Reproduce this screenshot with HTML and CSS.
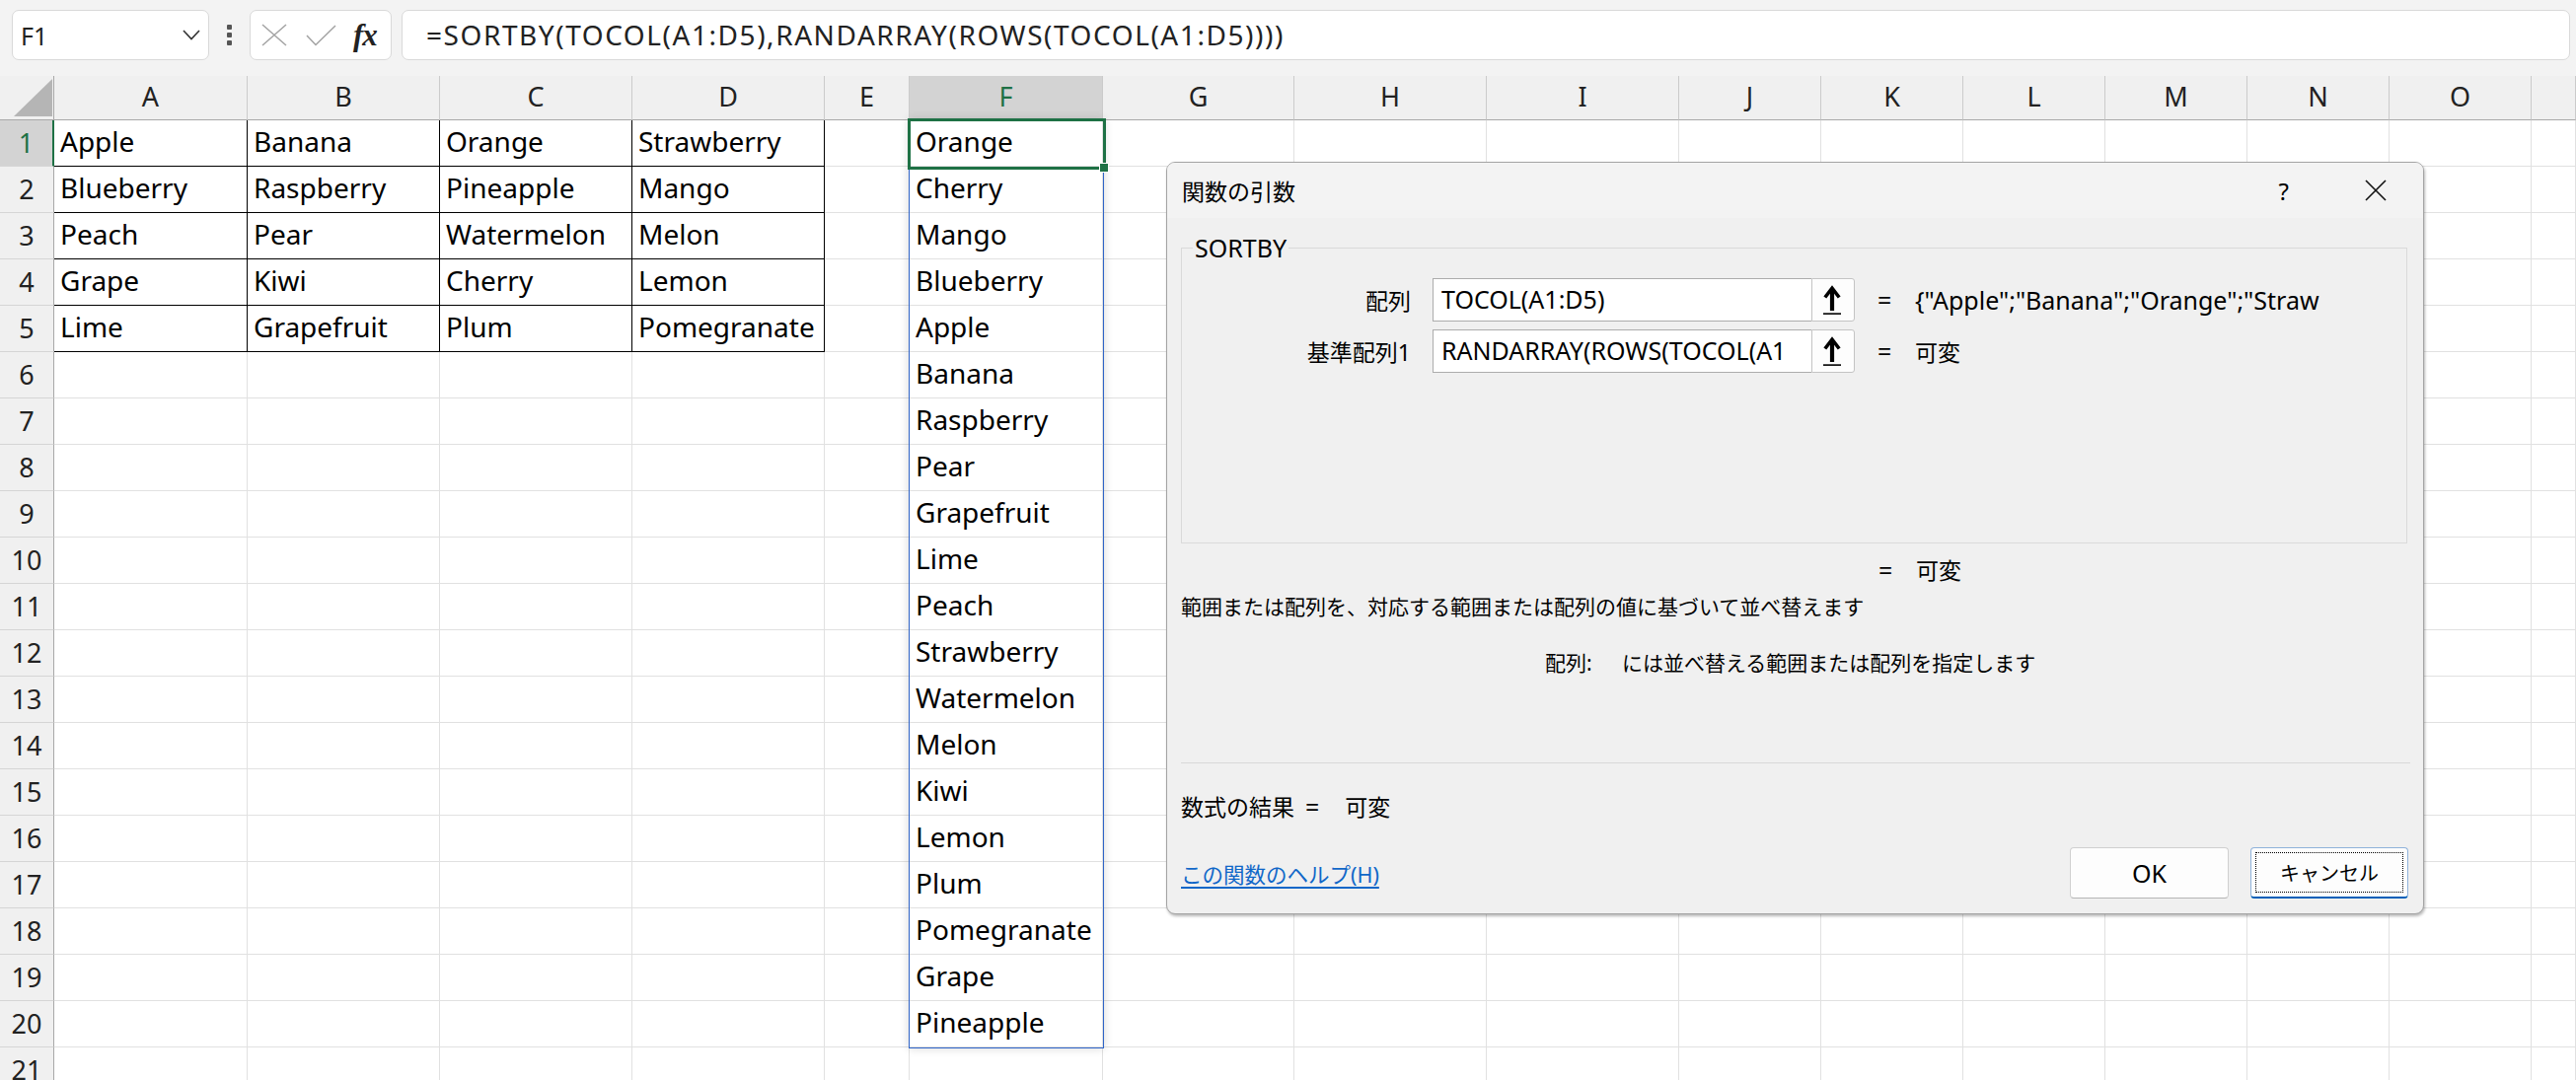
FILE: index.html
```html
<!DOCTYPE html>
<html lang="ja">
<head>
<meta charset="utf-8">
<title>SORTBY</title>
<link rel="stylesheet" href="styles.css">
</head>
<body>
<div class="fbar">
  <div class="namebox"><span class="nb-text">F1</span>
    <svg class="chev" width="18" height="11" viewBox="0 0 18 11"><polyline points="1,1 9,9.5 17,1" fill="none" stroke="#333" stroke-width="1.6"/></svg>
  </div>
  <div class="dots"><i></i><i></i><i></i></div>
  <div class="fxbox">
    <svg class="ico-x" width="26" height="23" viewBox="0 0 26 23"><path d="M1 1 L25 22 M25 1 L1 22" stroke="#a3a3a3" stroke-width="1.5" fill="none"/></svg>
    <svg class="ico-ok" width="31" height="22" viewBox="0 0 31 22"><polyline points="1,11 10,20.5 30,1" fill="none" stroke="#a3a3a3" stroke-width="1.5"/></svg>
    <span class="fx">fx</span>
  </div>
  <div class="formula">=SORTBY(TOCOL(A1:D5),RANDARRAY(ROWS(TOCOL(A1:D5))))</div>
</div>

<div class="sheet">
  <div class="row head">
    <span class="corner"><svg width="55" height="44" viewBox="0 0 55 44"><polygon points="53,3 53,41 14,41" fill="#b5b5b5"/></svg></span>
    <span class="ch">A</span><span class="ch">B</span><span class="ch">C</span><span class="ch">D</span><span class="ch">E</span><span class="ch sel">F</span><span class="ch">G</span><span class="ch">H</span><span class="ch">I</span><span class="ch">J</span><span class="ch">K</span><span class="ch">L</span><span class="ch">M</span><span class="ch">N</span><span class="ch">O</span><span class="ch"></span>
  </div>
  <div class="row"><span class="rh sel">1</span><span class="c b">Apple</span><span class="c b">Banana</span><span class="c b">Orange</span><span class="c b">Strawberry</span><span class="c"></span><span class="c">Orange</span><span class="c"></span><span class="c"></span><span class="c"></span><span class="c"></span><span class="c"></span><span class="c"></span><span class="c"></span><span class="c"></span><span class="c"></span><span class="c"></span></div>
  <div class="row"><span class="rh">2</span><span class="c b">Blueberry</span><span class="c b">Raspberry</span><span class="c b">Pineapple</span><span class="c b">Mango</span><span class="c"></span><span class="c">Cherry</span><span class="c"></span><span class="c"></span><span class="c"></span><span class="c"></span><span class="c"></span><span class="c"></span><span class="c"></span><span class="c"></span><span class="c"></span><span class="c"></span></div>
  <div class="row"><span class="rh">3</span><span class="c b">Peach</span><span class="c b">Pear</span><span class="c b">Watermelon</span><span class="c b">Melon</span><span class="c"></span><span class="c">Mango</span><span class="c"></span><span class="c"></span><span class="c"></span><span class="c"></span><span class="c"></span><span class="c"></span><span class="c"></span><span class="c"></span><span class="c"></span><span class="c"></span></div>
  <div class="row"><span class="rh">4</span><span class="c b">Grape</span><span class="c b">Kiwi</span><span class="c b">Cherry</span><span class="c b">Lemon</span><span class="c"></span><span class="c">Blueberry</span><span class="c"></span><span class="c"></span><span class="c"></span><span class="c"></span><span class="c"></span><span class="c"></span><span class="c"></span><span class="c"></span><span class="c"></span><span class="c"></span></div>
  <div class="row"><span class="rh">5</span><span class="c b">Lime</span><span class="c b">Grapefruit</span><span class="c b">Plum</span><span class="c b">Pomegranate</span><span class="c"></span><span class="c">Apple</span><span class="c"></span><span class="c"></span><span class="c"></span><span class="c"></span><span class="c"></span><span class="c"></span><span class="c"></span><span class="c"></span><span class="c"></span><span class="c"></span></div>
  <div class="row"><span class="rh">6</span><span class="c"></span><span class="c"></span><span class="c"></span><span class="c"></span><span class="c"></span><span class="c">Banana</span><span class="c"></span><span class="c"></span><span class="c"></span><span class="c"></span><span class="c"></span><span class="c"></span><span class="c"></span><span class="c"></span><span class="c"></span><span class="c"></span></div>
  <div class="row"><span class="rh">7</span><span class="c"></span><span class="c"></span><span class="c"></span><span class="c"></span><span class="c"></span><span class="c">Raspberry</span><span class="c"></span><span class="c"></span><span class="c"></span><span class="c"></span><span class="c"></span><span class="c"></span><span class="c"></span><span class="c"></span><span class="c"></span><span class="c"></span></div>
  <div class="row"><span class="rh">8</span><span class="c"></span><span class="c"></span><span class="c"></span><span class="c"></span><span class="c"></span><span class="c">Pear</span><span class="c"></span><span class="c"></span><span class="c"></span><span class="c"></span><span class="c"></span><span class="c"></span><span class="c"></span><span class="c"></span><span class="c"></span><span class="c"></span></div>
  <div class="row"><span class="rh">9</span><span class="c"></span><span class="c"></span><span class="c"></span><span class="c"></span><span class="c"></span><span class="c">Grapefruit</span><span class="c"></span><span class="c"></span><span class="c"></span><span class="c"></span><span class="c"></span><span class="c"></span><span class="c"></span><span class="c"></span><span class="c"></span><span class="c"></span></div>
  <div class="row"><span class="rh">10</span><span class="c"></span><span class="c"></span><span class="c"></span><span class="c"></span><span class="c"></span><span class="c">Lime</span><span class="c"></span><span class="c"></span><span class="c"></span><span class="c"></span><span class="c"></span><span class="c"></span><span class="c"></span><span class="c"></span><span class="c"></span><span class="c"></span></div>
  <div class="row"><span class="rh">11</span><span class="c"></span><span class="c"></span><span class="c"></span><span class="c"></span><span class="c"></span><span class="c">Peach</span><span class="c"></span><span class="c"></span><span class="c"></span><span class="c"></span><span class="c"></span><span class="c"></span><span class="c"></span><span class="c"></span><span class="c"></span><span class="c"></span></div>
  <div class="row"><span class="rh">12</span><span class="c"></span><span class="c"></span><span class="c"></span><span class="c"></span><span class="c"></span><span class="c">Strawberry</span><span class="c"></span><span class="c"></span><span class="c"></span><span class="c"></span><span class="c"></span><span class="c"></span><span class="c"></span><span class="c"></span><span class="c"></span><span class="c"></span></div>
  <div class="row"><span class="rh">13</span><span class="c"></span><span class="c"></span><span class="c"></span><span class="c"></span><span class="c"></span><span class="c">Watermelon</span><span class="c"></span><span class="c"></span><span class="c"></span><span class="c"></span><span class="c"></span><span class="c"></span><span class="c"></span><span class="c"></span><span class="c"></span><span class="c"></span></div>
  <div class="row"><span class="rh">14</span><span class="c"></span><span class="c"></span><span class="c"></span><span class="c"></span><span class="c"></span><span class="c">Melon</span><span class="c"></span><span class="c"></span><span class="c"></span><span class="c"></span><span class="c"></span><span class="c"></span><span class="c"></span><span class="c"></span><span class="c"></span><span class="c"></span></div>
  <div class="row"><span class="rh">15</span><span class="c"></span><span class="c"></span><span class="c"></span><span class="c"></span><span class="c"></span><span class="c">Kiwi</span><span class="c"></span><span class="c"></span><span class="c"></span><span class="c"></span><span class="c"></span><span class="c"></span><span class="c"></span><span class="c"></span><span class="c"></span><span class="c"></span></div>
  <div class="row"><span class="rh">16</span><span class="c"></span><span class="c"></span><span class="c"></span><span class="c"></span><span class="c"></span><span class="c">Lemon</span><span class="c"></span><span class="c"></span><span class="c"></span><span class="c"></span><span class="c"></span><span class="c"></span><span class="c"></span><span class="c"></span><span class="c"></span><span class="c"></span></div>
  <div class="row"><span class="rh">17</span><span class="c"></span><span class="c"></span><span class="c"></span><span class="c"></span><span class="c"></span><span class="c">Plum</span><span class="c"></span><span class="c"></span><span class="c"></span><span class="c"></span><span class="c"></span><span class="c"></span><span class="c"></span><span class="c"></span><span class="c"></span><span class="c"></span></div>
  <div class="row"><span class="rh">18</span><span class="c"></span><span class="c"></span><span class="c"></span><span class="c"></span><span class="c"></span><span class="c">Pomegranate</span><span class="c"></span><span class="c"></span><span class="c"></span><span class="c"></span><span class="c"></span><span class="c"></span><span class="c"></span><span class="c"></span><span class="c"></span><span class="c"></span></div>
  <div class="row"><span class="rh">19</span><span class="c"></span><span class="c"></span><span class="c"></span><span class="c"></span><span class="c"></span><span class="c">Grape</span><span class="c"></span><span class="c"></span><span class="c"></span><span class="c"></span><span class="c"></span><span class="c"></span><span class="c"></span><span class="c"></span><span class="c"></span><span class="c"></span></div>
  <div class="row"><span class="rh">20</span><span class="c"></span><span class="c"></span><span class="c"></span><span class="c"></span><span class="c"></span><span class="c">Pineapple</span><span class="c"></span><span class="c"></span><span class="c"></span><span class="c"></span><span class="c"></span><span class="c"></span><span class="c"></span><span class="c"></span><span class="c"></span><span class="c"></span></div>
  <div class="row"><span class="rh">21</span><span class="c"></span><span class="c"></span><span class="c"></span><span class="c"></span><span class="c"></span><span class="c"></span><span class="c"></span><span class="c"></span><span class="c"></span><span class="c"></span><span class="c"></span><span class="c"></span><span class="c"></span><span class="c"></span><span class="c"></span><span class="c"></span></div>
</div>

<div class="spill"></div>
<div class="selbox"><span class="handle"></span></div>

<div class="dialog">
  <div class="titlebar">
    <span class="title">関数の引数</span>
    <span class="qmark">?</span>
    <svg class="close" width="22" height="22" viewBox="0 0 22 22"><path d="M1 1 L21 21 M21 1 L1 21" stroke="#111" stroke-width="1.6" fill="none"/></svg>
  </div>
  <div class="dbody">
    <fieldset class="group">
      <legend>SORTBY</legend>
      <div class="arg">
        <span class="alabel">配列</span>
        <span class="inp">TOCOL(A1:D5)</span>
        <span class="ref"><svg width="18" height="30" viewBox="0 0 18 30"><path d="M9 4 L9 26" stroke="#000" stroke-width="4.2"/><polyline points="1.8,12.5 9,3.2 16.2,12.5" fill="none" stroke="#000" stroke-width="3.6"/><rect x="0" y="28.3" width="18" height="1.6" fill="#000"/></svg></span>
        <span class="eq">=</span>
        <span class="val">{"Apple";"Banana";"Orange";"Straw</span>
      </div>
      <div class="arg">
        <span class="alabel">基準配列1</span>
        <span class="inp">RANDARRAY(ROWS(TOCOL(A1</span>
        <span class="ref"><svg width="18" height="30" viewBox="0 0 18 30"><path d="M9 4 L9 26" stroke="#000" stroke-width="4.2"/><polyline points="1.8,12.5 9,3.2 16.2,12.5" fill="none" stroke="#000" stroke-width="3.6"/><rect x="0" y="28.3" width="18" height="1.6" fill="#000"/></svg></span>
        <span class="eq">=</span>
        <span class="val cjk">可変</span>
      </div>
    </fieldset>
    <div class="line total"><span class="eq">=</span><span class="val cjk">可変</span></div>
    <div class="line desc">範囲または配列を、対応する範囲または配列の値に基づいて並べ替えます</div>
    <div class="line argdesc"><span class="argname">配列:</span><span>には並べ替える範囲または配列を指定します</span></div>
    <div class="sep"></div>
    <div class="line result"><span class="rlabel">数式の結果</span><span class="eq2">=</span><span class="cjk">可変</span></div>
    <div class="footer">
      <a class="helplink" href="#">この関数のヘルプ(H)</a>
      <span class="btn ok">OK</span>
      <span class="btn cancel"><span class="focus">キャンセル</span></span>
    </div>
  </div>
</div>
</body>
</html>
```

FILE: styles.css
```css
html, body {
  margin: 0;
  padding: 0;
}
body {
  width: 2611px;
  height: 1095px;
  overflow: hidden;
  position: relative;
  background: #ffffff;
  font-family: "Noto Sans", "Noto Sans CJK JP", sans-serif;
  color: #000;
}

/* ---------- formula bar ---------- */
.fbar {
  height: 77px;
  box-sizing: border-box;
  padding-top: 10px;
  background: #f3f3f3;
  display: flex;
  align-items: flex-start;
}
.namebox {
  margin-left: 12px;
  width: 200px;
  height: 51px;
  box-sizing: border-box;
  background: #fff;
  border: 1px solid #d9d9d9;
  border-radius: 7px;
  display: flex;
  align-items: center;
  padding-left: 8px;
}
.nb-text {
  font-size: 25px;
  color: #222;
  flex: 1;
}
.chev {
  margin-right: 8px;
}
.dots {
  margin-left: 18px;
  width: 6px;
  height: 51px;
  display: flex;
  flex-direction: column;
  justify-content: center;
  gap: 3px;
}
.dots i {
  display: block;
  width: 5px;
  height: 5px;
  background: #555;
  border-radius: 1px;
}
.fxbox {
  margin-left: 17px;
  width: 144px;
  height: 51px;
  box-sizing: border-box;
  background: #fff;
  border: 1px solid #d9d9d9;
  border-radius: 7px;
  display: flex;
  align-items: center;
  padding-left: 11px;
}
.ico-x { margin-right: 19px; }
.ico-ok { margin-right: 17px; }
.fx {
  font-family: "Liberation Serif", serif;
  font-style: italic;
  font-weight: bold;
  font-size: 31px;
  color: #222;
  letter-spacing: -1px;
}
.formula {
  margin-left: 10px;
  width: 2198px;
  height: 51px;
  box-sizing: border-box;
  background: #fff;
  border: 1px solid #d9d9d9;
  border-radius: 7px;
  padding-left: 24px;
  font-size: 28px;
  line-height: 48px;
  letter-spacing: 1.56px;
  color: #222;
  white-space: nowrap;
}

/* ---------- grid ---------- */
.row {
  display: grid;
  grid-template-columns: 55px 196px 195px 195px 195px 86px 196px 194px 195px 195px 144px 144px 144px 144px 144px 144px 1fr;
  height: 47px;
}
.row.head {
  height: 45px;
}
.row > span {
  box-sizing: border-box;
  white-space: nowrap;
  overflow: hidden;
}
.corner {
  background: #f0f0f0;
  border-right: 1px solid #a8a8a8;
  border-bottom: 1px solid #a8a8a8;
}
.corner svg { display: block; }
.ch {
  background: #f0f0f0;
  border-right: 1px solid #cbcbcb;
  border-bottom: 1px solid #a8a8a8;
  text-align: center;
  font-size: 27px;
  line-height: 41px;
  color: #222;
}
.ch.sel {
  background: #d3d3d3;
  color: #1e7145;
}
.rh {
  background: #f0f0f0;
  border-right: 1px solid #a8a8a8;
  border-bottom: 1px solid #d5d5d5;
  text-align: center;
  font-size: 27px;
  line-height: 45px;
  color: #222;
}
.rh.sel {
  background: #d3d3d3;
  color: #1e7145;
  border-right: 2px solid #1e7145;
}
.c {
  border-right: 1px solid #e1e1e1;
  border-bottom: 1px solid #e1e1e1;
  padding-left: 6px;
  font-size: 28px;
  line-height: 43px;
  color: #000;
}
.c.b {
  border-right-color: #000;
  border-bottom-color: #000;
}

/* spill range + active cell (overlays) */
.spill {
  position: absolute;
  left: 921px;
  top: 121px;
  width: 198px;
  height: 942px;
  box-sizing: border-box;
  border: 1px solid #2f64c8;
  box-shadow: 0 0 9px rgba(0, 0, 0, 0.16);
  pointer-events: none;
}
.selbox {
  position: absolute;
  left: 920px;
  top: 120px;
  width: 201px;
  height: 52px;
  box-sizing: border-box;
  border: 3px solid #1e7145;
}
.handle {
  position: absolute;
  right: -6px;
  bottom: -6px;
  width: 8px;
  height: 8px;
  background: #1e7145;
  border: 1px solid #fff;
}

/* ---------- dialog ---------- */
.dialog {
  position: absolute;
  left: 1182px;
  top: 164px;
  width: 1275px;
  height: 763px;
  box-sizing: border-box;
  background: #f0f0f0;
  border: 1px solid #a4a4a4;
  border-radius: 9px;
  box-shadow: 1px 2px 3px rgba(0, 0, 0, 0.28);
  overflow: hidden;
}
.titlebar {
  height: 56px;
  background: #f3f3f3;
  display: flex;
  align-items: center;
  padding-left: 15px;
}
.title {
  font-size: 23px;
  flex: 1;
}
.qmark {
  font-size: 24px;
  margin-right: 77px;
}
.close {
  margin-right: 37px;
}
.dbody {
  padding: 0 15px 0 14px;
}
.group {
  margin: 15px 1px 0 0;
  padding: 16px 0 164px 0;
  border: 1px solid #dadada;
  min-width: 0;
}
.group legend {
  margin-left: 11px;
  padding: 0 2px;
  font-size: 25px;
  line-height: 30px;
}
.arg {
  display: flex;
  align-items: center;
  height: 44px;
  margin-bottom: 8px;
}
.alabel {
  width: 232px;
  margin-right: 22px;
  text-align: right;
  font-size: 23px;
}
.inp {
  width: 384px;
  height: 44px;
  box-sizing: border-box;
  background: #fff;
  border: 1px solid #acacac;
  border-right: none;
  padding-left: 8px;
  font-size: 25px;
  line-height: 41px;
  white-space: nowrap;
  overflow: hidden;
}
.ref {
  width: 44px;
  height: 44px;
  box-sizing: border-box;
  background: #fdfdfd;
  border: 1px solid #c4c4c4;
  border-radius: 0 3px 3px 0;
  display: flex;
  align-items: center;
  justify-content: center;
}
.ref svg { display: block; margin-left: -2px; }
.eq {
  width: 38px;
  margin-left: 23px;
  font-size: 25px;
}
.val {
  font-size: 25px;
  white-space: nowrap;
}
.cjk {
  font-size: 23px;
}
.line {
  height: 34px;
  line-height: 34px;
  white-space: nowrap;
  display: flex;
  align-items: center;
}
.total {
  margin-top: 10px;
  padding-left: 684px;
}
.desc {
  margin-top: 3px;
  font-size: 21px;
}
.argdesc {
  margin-top: 23px;
  padding-left: 369px;
  font-size: 21px;
}
.argname {
  width: 78px;
}
.sep {
  margin-top: 84px;
  margin-right: -2px;
  height: 1px;
  background: #d9d9d9;
}
.result {
  margin-top: 27px;
}
.rlabel {
  font-size: 23px;
}
.eq2 {
  font-size: 25px;
  margin-left: 11px;
  margin-right: 26px;
}
.footer {
  margin-top: 24px;
  height: 52px;
  display: flex;
  align-items: center;
}
.helplink {
  font-size: 21.5px;
  color: #1067c8;
  text-decoration: underline;
  text-decoration-thickness: 2px;
  text-underline-offset: 4px;
  flex: 1;
}
.btn {
  height: 52px;
  box-sizing: border-box;
  border-radius: 4px;
  display: flex;
  align-items: center;
  justify-content: center;
  background: #fdfdfd;
}
.ok {
  width: 161px;
  margin-right: 22px;
  border: 1px solid #d0d0d0;
  border-bottom-color: #b5b5b5;
  font-size: 25px;
}
.cancel {
  width: 160px;
  border: 1px solid #8fb2da;
  border-bottom: 2px solid #005fb8;
  padding: 4px;
}
.focus {
  flex: 1;
  align-self: stretch;
  border: 1px dotted #000;
  display: flex;
  align-items: center;
  justify-content: center;
  font-size: 20px;
}
```
